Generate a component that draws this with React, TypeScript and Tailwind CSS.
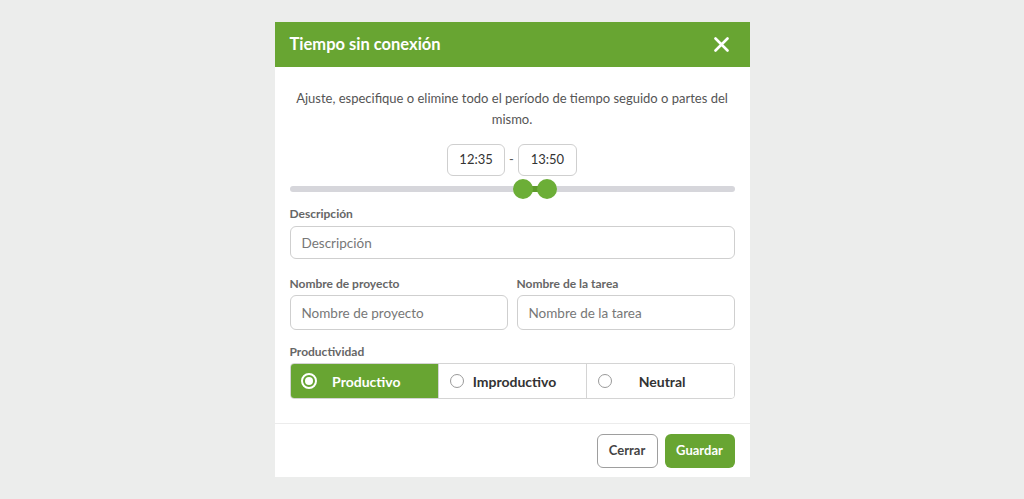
import { useState } from "react";

const font = { fontFamily: "Lato, 'Noto Sans', sans-serif" };

function Radio({ checked }: { checked: boolean }) {
  if (checked) {
    return (
      <span className="absolute left-[10px] top-1/2 -translate-y-1/2 w-[16px] h-[16px] rounded-full border-2 border-white flex items-center justify-center">
        <span className="w-[8px] h-[8px] rounded-full bg-white" />
      </span>
    );
  }
  return (
    <span className="absolute left-[11px] top-1/2 -translate-y-1/2 w-[14px] h-[14px] rounded-full border border-[#9a9a9a] bg-white" />
  );
}

export default function App() {
  const [mode, setMode] = useState("Productivo");
  const options = ["Productivo", "Improductivo", "Neutral"];

  return (
    <div
      className="min-h-[499px] bg-[#ecedec] flex justify-center items-start pt-[22px]"
      style={font}
    >
      <div className="w-[475px] bg-white flex flex-col">
        {/* header */}
        <div className="h-[45px] bg-[#68a532] flex items-center justify-between pl-[15px] pr-[21px]">
          <span className="text-white font-bold text-[16.5px]">
            Tiempo sin conexión
          </span>
          <svg width="15" height="15" viewBox="0 0 15 15">
            <path
              d="M1.5 1.5 L13.5 13.5 M13.5 1.5 L1.5 13.5"
              stroke="white"
              strokeWidth="2.6"
              strokeLinecap="round"
            />
          </svg>
        </div>

        {/* body */}
        <div className="px-[15px] pt-[21px] pb-[24px] flex flex-col">
          <p className="text-center text-[13px] leading-[21px] text-[#555]">
            Ajuste, especifique o elimine todo el período de tiempo seguido o
            partes del mismo.
          </p>

          <div className="mt-[14px] flex items-center justify-center gap-[4px]">
            <div className="w-[58px] h-[32px] border border-[#cfcfcf] rounded-[6px] flex items-center justify-center text-[13px] text-[#333]">
              12:35
            </div>
            <span className="text-[13px] text-[#555]">-</span>
            <div className="w-[59px] h-[32px] border border-[#cfcfcf] rounded-[6px] flex items-center justify-center text-[13px] text-[#333]">
              13:50
            </div>
          </div>

          {/* slider */}
          <div className="relative h-[20px] mt-[3px]">
            <div className="absolute left-0 right-0 top-[7px] h-[6px] rounded-full bg-[#d6d6db]" />
            <div className="absolute left-[233px] w-[24px] top-[7px] h-[6px] bg-[#5e9a2c]" />
            <div className="absolute left-[223px] top-0 w-[20px] h-[20px] rounded-full bg-[#6cae37]" />
            <div className="absolute left-[247px] top-0 w-[20px] h-[20px] rounded-full bg-[#6cae37]" />
          </div>

          <label className="mt-[7px] text-[12px] leading-[16px] font-bold text-[#666]">
            Descripción
          </label>
          <input
            className="mt-[4px] h-[33px] border border-[#cfcfcf] rounded-[6px] px-[11px] text-[13.5px] text-[#333] placeholder:text-[#777] outline-none"
            placeholder="Descripción"
          />

          <div className="mt-[17px] grid grid-cols-2 gap-[9px]">
            <div className="flex flex-col">
              <label className="text-[12px] leading-[16px] font-bold text-[#666]">
                Nombre de proyecto
              </label>
              <input
                className="mt-[3px] h-[35px] border border-[#cfcfcf] rounded-[6px] px-[11px] text-[13.5px] text-[#333] placeholder:text-[#777] outline-none"
                placeholder="Nombre de proyecto"
              />
            </div>
            <div className="flex flex-col">
              <label className="text-[12px] leading-[16px] font-bold text-[#666]">
                Nombre de la tarea
              </label>
              <input
                className="mt-[3px] h-[35px] border border-[#cfcfcf] rounded-[6px] px-[11px] text-[13.5px] text-[#333] placeholder:text-[#777] outline-none"
                placeholder="Nombre de la tarea"
              />
            </div>
          </div>

          <label className="mt-[14px] text-[12px] leading-[16px] font-bold text-[#666]">
            Productividad
          </label>
          <div className="mt-[3px] h-[36px] grid grid-cols-3 border border-[#d4d4d4] rounded-[4px] overflow-hidden">
            {options.map((o, i) => {
              const active = mode === o;
              return (
                <button
                  key={o}
                  onClick={() => setMode(o)}
                  className={
                    "relative flex items-center justify-center text-[14px] font-bold " +
                    (active
                      ? "bg-[#68a532] text-white"
                      : "bg-white text-[#333]") +
                    (i > 0 ? " border-l border-[#d4d4d4]" : "")
                  }
                >
                  <Radio checked={active} />
                  <span className="pl-[4px]">{o}</span>
                </button>
              );
            })}
          </div>
        </div>

        {/* footer */}
        <div className="border-t border-[#ececec] pt-[10px] pb-[9px] pr-[15px] flex justify-end gap-[7px]">
          <button className="w-[61px] h-[34px] border border-[#9e9e9e] rounded-[6px] bg-white text-[13px] font-bold text-[#444]">
            Cerrar
          </button>
          <button className="w-[70px] h-[34px] rounded-[6px] bg-[#68a532] text-[13px] font-bold text-white">
            Guardar
          </button>
        </div>
      </div>
    </div>
  );
}
